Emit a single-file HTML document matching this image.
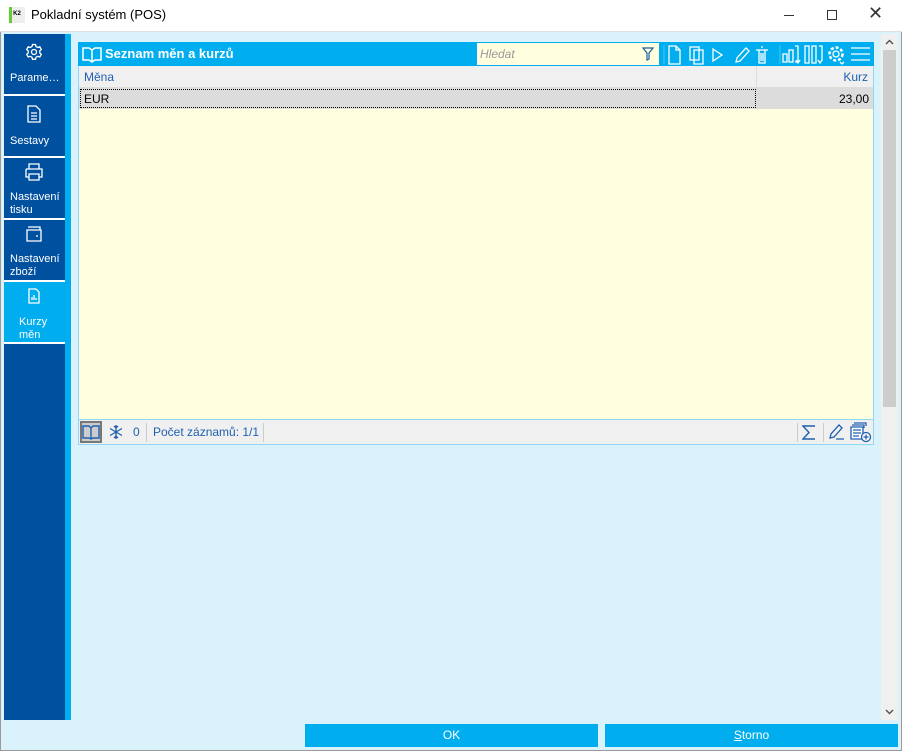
<!DOCTYPE html>
<html><head><meta charset="utf-8"><style>
*{box-sizing:border-box;margin:0;padding:0}
body{width:902px;height:751px;position:relative;overflow:hidden;font-family:"Liberation Sans","DejaVu Sans",sans-serif;background:#daf2fc;font-size:12px}
.abs{position:absolute}
.title{left:0;top:0;width:902px;height:32px;background:#fff;border-bottom:1px solid #e0e0e0}
.side{left:4px;top:34px;width:61px;height:686px;background:#0050a0}
.strip{left:65px;top:34px;width:6px;height:686px;background:#00aeef}
.item{position:absolute;left:0;width:61px;color:#fff;font-size:11px;border-bottom:2px solid #fff}
.item .t{position:absolute;left:6px;line-height:13px}
.hdr{left:78px;top:42px;width:796px;height:24px;background:#00aeef;color:#fff}
.btn{top:724px;height:23px;background:#00aeef;color:#fff;text-align:center;line-height:23px;font-size:12px}
</style></head><body>
<div class="abs" style="left:0;top:0;width:902px;height:751px;border:1px solid #9a9a9a"></div>
<div class="abs title">
 <div class="abs" style="left:9px;top:7px;width:16px;height:16px;background:linear-gradient(90deg,#6c3 0 3px,#eee 3px);font-size:6px;font-weight:bold;color:#000;line-height:14px;text-align:center">K2</div>
 <div class="abs" style="left:31px;top:7px;font-size:13px;color:#000">Pokladní systém (POS)</div>
 <div class="abs" style="left:784px;top:15px;width:10px;height:1px;background:#333"></div>
 <div class="abs" style="left:827px;top:10px;width:10px;height:10px;border:1px solid #333"></div>
 <div class="abs" style="left:868px;top:3px;font-size:18px;color:#333">✕</div>
</div>
<div class="abs side">
 <div class="item" style="top:0;height:62px"><svg class="abs" style="left:21px;top:9px" width="18" height="18" viewBox="0 0 18 18" fill="none" stroke="#fff" stroke-width="1.3"><circle cx="9" cy="9" r="2.5"/><path d="M7.5 1.5h3l.5 2 1.8 1 2-.7 1.5 2.6-1.5 1.4v2.2l1.5 1.4-1.5 2.6-2-.7-1.8 1-.5 2h-3l-.5-2-1.8-1-2 .7-1.5-2.6 1.5-1.4V7.8L1.7 6.4l1.5-2.6 2 .7 1.8-1z"/></svg><div class="t" style="top:38px">Parame…</div></div>
 <div class="item" style="top:62px;height:62px"><svg class="abs" style="left:23px;top:9px" width="14" height="18" viewBox="0 0 14 18" fill="none" stroke="#fff" stroke-width="1.3"><path d="M1 1h8l4 4v12H1zM4 8h6M4 11h6M4 14h6"/></svg><div class="t" style="top:39px">Sestavy</div></div>
 <div class="item" style="top:124px;height:62px"><svg class="abs" style="left:20px;top:5px" width="20" height="18" viewBox="0 0 20 18" fill="none" stroke="#fff" stroke-width="1.3"><path d="M5 6V1h10v5M2 6h16v8h-3M5 14H2V6M5 11h10v6H5z"/></svg><div class="t" style="top:33px">Nastavení<br>tisku</div></div>
 <div class="item" style="top:186px;height:62px"><svg class="abs" style="left:22px;top:6px" width="16" height="16" viewBox="0 0 16 16" fill="none" stroke="#fff" stroke-width="1.3"><path d="M1 4h14v11H1zM2 1h12v3M10 10h2"/></svg><div class="t" style="top:33px">Nastavení<br>zboží</div></div>
 <div class="item" style="top:248px;height:62px;background:#00aeef"><svg class="abs" style="left:24px;top:6px" width="12" height="16" viewBox="0 0 12 16" fill="none" stroke="#fff" stroke-width="1.3"><path d="M1 1h7l3 3v11H1zM4 12V9M6 12V7M8 12v-2"/></svg><div class="t" style="top:34px;left:15px">Kurzy<br>měn</div></div>
</div>
<div class="abs strip"></div>
<div class="abs" style="left:78px;top:42px;width:796px;height:403px;border:1px solid #8fd8f5;background:#ffffe0"></div>
<div class="abs hdr">
 <svg class="abs" style="left:4px;top:4px" width="20" height="17" viewBox="0 0 20 17" fill="none" stroke="#fff" stroke-width="1.5"><path d="M1 2h6l3 2 3-2h6v12h-6l-3 2-3-2H1zM10 4v12"/></svg>
 <div class="abs" style="left:27px;top:4px;font-weight:bold;font-size:13px">Seznam měn a kurzů</div>
 <div class="abs" style="left:399px;top:1px;width:182px;height:22px;background:#ffffe0;color:#999;font-style:italic;padding:4px 3px;font-size:12px">Hledat</div>
 <svg class="abs" style="left:564px;top:5px" width="12" height="14" viewBox="0 0 12 14" fill="none" stroke="#2060a0" stroke-width="1.2"><path d="M1 1h10L7 6v6L5 13V6z"/></svg>
 <svg class="abs" style="left:584px;top:0" width="212" height="24" viewBox="0 0 212 24" fill="none" stroke="#fff" stroke-width="1.3">
  <path d="M2 3v19M118 3v19" stroke="#3bbff2"/>
  <path d="M7 4h7l4 4v14H7zM14 4v4h4"/>
  <path d="M28 5h9v13h-9zM32 8h9v14h-9z"/>
  <path d="M51 7l9 6-9 6z"/>
  <path d="M74 20l1-4 9-10 3 3-9 10zM74 20l4-1"/>
  <path d="M94 8h12M97 8v13h6V8M99 5h2M99 11v8M101 11v8"/>
  <path d="M200 0" />
  <path d="M121 12h4v8h-4zM127 8h4v12h-4zM133 4h3v16h-3M134 18l2 3 2-3"/>
  <path d="M143 4h4v17h-4zM150 4h4v17h-4zM157 4h3v15M156 18l2 3 2-3"/>
  <circle cx="174" cy="12" r="3"/><circle cx="174" cy="12" r="6.5" stroke-dasharray="3 2" stroke-width="2.5"/>
  <path d="M178 20l2 2 2-2" />
  <path d="M189 6h19M189 12h19M189 18h19"/>
 </svg>
</div>
<div class="abs" style="left:79px;top:66px;width:794px;height:22px;background:#f0f0f0;color:#2060b0;border-bottom:1px solid #ddd">
 <div class="abs" style="left:5px;top:4px">Měna</div>
 <div class="abs" style="left:677px;top:0;width:1px;height:22px;background:#ddd"></div>
 <div class="abs" style="right:5px;top:4px">Kurz</div>
</div>
<div class="abs" style="left:79px;top:88px;width:794px;height:21px;background:#dcdcdc">
 <div class="abs" style="left:1px;top:1px;width:676px;height:19px;border:1px dotted #000"></div>
 <div class="abs" style="left:5px;top:4px;color:#000">EUR</div>
 <div class="abs" style="right:4px;top:4px;color:#000">23,00</div>
</div>
<div class="abs" style="left:79px;top:419px;width:794px;height:25px;background:#f0f0f0;border-top:1px solid #8fd8f5;color:#2060b0">
 <div class="abs" style="left:1px;top:1px;width:22px;height:22px;border:2px solid #777;background:#ccc"></div>
 <svg class="abs" style="left:3px;top:5px" width="18" height="15" viewBox="0 0 18 15" fill="none" stroke="#2060b0" stroke-width="1.4"><path d="M1 1h6l2 2 2-2h6v12h-6l-2 1-2-1H1zM9 3v11"/></svg>
 <svg class="abs" style="left:29px;top:4px" width="16" height="16" viewBox="0 0 16 16" fill="none" stroke="#2060b0" stroke-width="1.3"><path d="M8 1v14M2 4.5l12 7M2 11.5l12-7M6 2l2 2 2-2M6 14l2-2 2 2"/></svg>
 <div class="abs" style="left:54px;top:5px">0</div>
 <div class="abs" style="left:67px;top:3px;width:1px;height:19px;background:#ccc"></div>
 <div class="abs" style="left:74px;top:5px">Počet záznamů: 1/1</div>
 <div class="abs" style="left:184px;top:3px;width:1px;height:19px;background:#ccc"></div>
 <div class="abs" style="left:718px;top:3px;width:1px;height:19px;background:#ccc"></div>
 <svg class="abs" style="left:723px;top:4px" width="14" height="17" viewBox="0 0 14 17" fill="none" stroke="#2060b0" stroke-width="1.4"><path d="M13 2H1l6 6.5L1 15h12"/></svg>
 <div class="abs" style="left:744px;top:3px;width:1px;height:19px;background:#ccc"></div>
 <svg class="abs" style="left:749px;top:3px" width="18" height="18" viewBox="0 0 18 18" fill="none" stroke="#2060b0" stroke-width="1.3"><path d="M2 15l1-4 8-9 3 3-8 9zM8 16h8"/></svg>
 <svg class="abs" style="left:771px;top:2px" width="22" height="21" viewBox="0 0 22 21" fill="#fff" stroke="#2060b0" stroke-width="1.3"><path d="M4 1h12v3M2 3h12v3M1 5h12v12H1zM3 8h8M3 11h8M3 14h6"/><circle cx="16" cy="15" r="4.5"/><path d="M16 12.5v5M13.5 15h5"/></svg>
</div>
<div class="abs" style="left:881px;top:34px;width:17px;height:686px;background:#f0f0f0"></div>
<div class="abs" style="left:883px;top:50px;width:13px;height:357px;background:#cdcdcd"></div>
<svg class="abs" style="left:885px;top:39px" width="9" height="6" viewBox="0 0 9 6" fill="none" stroke="#555" stroke-width="1.5"><path d="M1 5l3.5-3.5L8 5"/></svg>
<svg class="abs" style="left:885px;top:709px" width="9" height="6" viewBox="0 0 9 6" fill="none" stroke="#555" stroke-width="1.5"><path d="M1 1l3.5 3.5L8 1"/></svg>
<div class="abs btn" style="left:305px;width:293px">OK</div>
<div class="abs btn" style="left:605px;width:293px"><u>S</u>torno</div>
</body></html>
